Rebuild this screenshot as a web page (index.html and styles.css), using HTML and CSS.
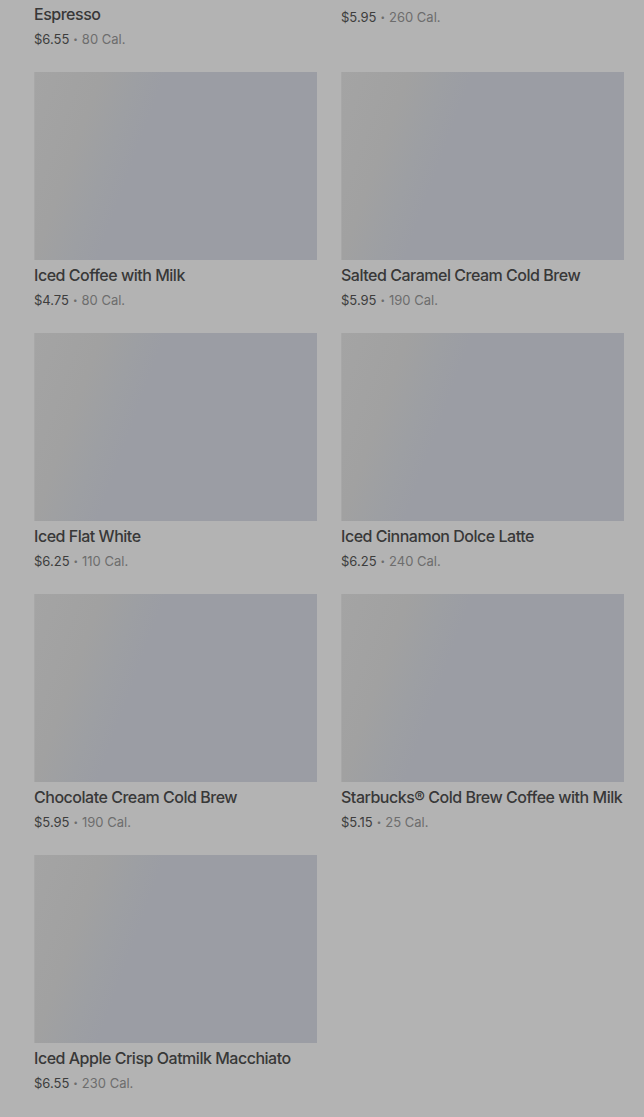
FILE: index.html
```html
<!DOCTYPE html>
<html lang="en">
<head>
<meta charset="utf-8">
<title>Cold Coffees</title>
<link rel="stylesheet" href="styles.css">
</head>
<body>
<main class="menu">
  <ul class="grid">
    <li class="card">
      <div class="thumb"></div>
      <h3 class="name">Iced Toasted Vanilla Oatmilk Shaken Espresso</h3>
      <p class="meta"><span class="price">$6.55</span><span class="dot">•</span><span class="cal">80 Cal.</span></p>
    </li>
    <li class="card">
      <div class="thumb"></div>
      <h3 class="name">Vanilla Sweet Cream Cold Brew</h3>
      <p class="meta"><span class="price">$5.95</span><span class="dot">•</span><span class="cal">260 Cal.</span></p>
    </li>
    <li class="card">
      <div class="thumb"></div>
      <h3 class="name">Iced Coffee with Milk</h3>
      <p class="meta"><span class="price">$4.75</span><span class="dot">•</span><span class="cal">80 Cal.</span></p>
    </li>
    <li class="card">
      <div class="thumb"></div>
      <h3 class="name">Salted Caramel Cream Cold Brew</h3>
      <p class="meta"><span class="price">$5.95</span><span class="dot">•</span><span class="cal">190 Cal.</span></p>
    </li>
    <li class="card">
      <div class="thumb"></div>
      <h3 class="name">Iced Flat White</h3>
      <p class="meta"><span class="price">$6.25</span><span class="dot">•</span><span class="cal">110 Cal.</span></p>
    </li>
    <li class="card">
      <div class="thumb"></div>
      <h3 class="name">Iced Cinnamon Dolce Latte</h3>
      <p class="meta"><span class="price">$6.25</span><span class="dot">•</span><span class="cal">240 Cal.</span></p>
    </li>
    <li class="card">
      <div class="thumb"></div>
      <h3 class="name">Chocolate Cream Cold Brew</h3>
      <p class="meta"><span class="price">$5.95</span><span class="dot">•</span><span class="cal">190 Cal.</span></p>
    </li>
    <li class="card">
      <div class="thumb"></div>
      <h3 class="name">Starbucks® Cold Brew Coffee with Milk</h3>
      <p class="meta"><span class="price">$5.15</span><span class="dot">•</span><span class="cal">25 Cal.</span></p>
    </li>
    <li class="card">
      <div class="thumb"></div>
      <h3 class="name">Iced Apple Crisp Oatmilk Macchiato</h3>
      <p class="meta"><span class="price">$6.55</span><span class="dot">•</span><span class="cal">230 Cal.</span></p>
    </li>
  </ul>
</main>
</body>
</html>
```

FILE: styles.css
```css
html, body {
  margin: 0;
  padding: 0;
  background: #b3b3b3;
}

body {
  font-family: Inter, "Noto Sans", "Liberation Sans", sans-serif;
  color: #3a3a3a;
  overflow: hidden;
}

.menu {
  padding: 0 20px 0 34px;
  margin-top: -211px;
}

.grid {
  list-style: none;
  margin: 0;
  padding: 0;
  display: grid;
  grid-template-columns: 283px 283px;
  column-gap: 24px;
  row-gap: 23px;
  align-items: start;
}

.card {
  display: flex;
  flex-direction: column;
}

.thumb {
  height: 188px;
  background:
    linear-gradient(110deg, #a4a4a4 0px, #a1a1a1 64px, #9d9fa3 98px, #9b9da4 124px, #9b9da4 100%);
  box-shadow: inset 1px 0 0 #a8a8a8;
}

.name {
  margin: 4px 0 0;
  font-size: 16px;
  line-height: 22px;
  font-weight: 500;
  color: #383838;
  letter-spacing: -0.03em;
}

.meta {
  margin: 4px 0 0;
  display: flex;
  align-items: center;
  height: 20px;
  font-size: 13px;
  line-height: 20px;
  color: #3d3d3d;
}

.dot {
  margin: 0 4px 0 4px;
  font-size: 8px;
  line-height: 20px;
  color: #6d6d6d;
}

.cal {
  color: #6d6d6d;
}
```
